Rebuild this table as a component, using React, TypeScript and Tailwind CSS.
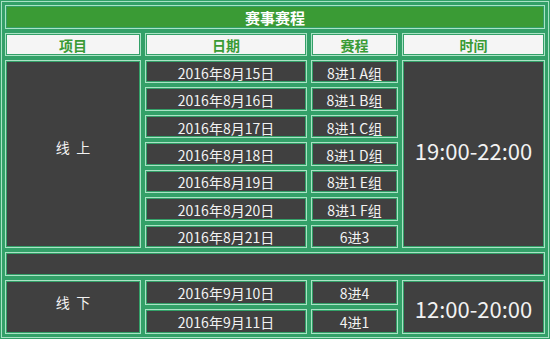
import React from "react";

const font = { fontFamily: '"Noto Sans CJK SC", "Noto Sans", sans-serif' };

function Cell({
  className = "",
  children,
}: {
  className?: string;
  children?: React.ReactNode;
}) {
  return (
    <div
      className={
        "flex items-center justify-center border border-[#a9e3c5] shadow-[inset_0_0_0_1px_#33a068] leading-none " +
        className
      }
    >
      {children}
    </div>
  );
}

const online = [
  ["2016年8月15日", "8进1 A组"],
  ["2016年8月16日", "8进1 B组"],
  ["2016年8月17日", "8进1 C组"],
  ["2016年8月18日", "8进1 D组"],
  ["2016年8月19日", "8进1 E组"],
  ["2016年8月20日", "8进1 F组"],
  ["2016年8月21日", "6进3"],
];

const offline = [
  ["2016年9月10日", "8进4"],
  ["2016年9月11日", "4进1"],
];

export default function App() {
  const dark = "bg-[#404040] text-[#f2f2f2] text-[14px] pt-[2px]";
  return (
    <div className="w-[550px] h-[339px] bg-[#33a068] p-px" style={font}>
      <div className="h-full border border-[#a9e3c5] p-[3px]">
        <div className="grid grid-cols-[136px_162px_87px_143px] grid-rows-[24px_23px_repeat(7,23.43px)_24px_25px_25px] gap-[4px]">
          <Cell className="col-span-4 bg-[#3a9b35] text-white font-bold text-[15px]">
            赛事赛程
          </Cell>
          <Cell className="bg-[#f5f5f5] text-[#3a9b35] font-bold text-[14px]">项目</Cell>
          <Cell className="bg-[#f5f5f5] text-[#3a9b35] font-bold text-[14px]">日期</Cell>
          <Cell className="bg-[#f5f5f5] text-[#3a9b35] font-bold text-[14px]">赛程</Cell>
          <Cell className="bg-[#f5f5f5] text-[#3a9b35] font-bold text-[14px]">时间</Cell>

          <Cell className="row-span-7 col-start-1 row-start-3 bg-[#404040] text-[#f2f2f2] text-[14px] pb-[14px]">
            线&nbsp;&nbsp;上
          </Cell>
          {online.map(([d, s]) => (
            <React.Fragment key={d}>
              <Cell className={"col-start-2 " + dark}>{d}</Cell>
              <Cell className={"col-start-3 " + dark}>{s}</Cell>
            </React.Fragment>
          ))}
          <Cell className="col-start-4 row-start-3 row-span-7 bg-[#404040] text-[#f2f2f2] text-[22px] pb-[8px]">
            19:00-22:00
          </Cell>

          <Cell className="col-span-4 bg-[#404040]" />

          <Cell className="row-span-2 col-start-1 bg-[#404040] text-[#f2f2f2] text-[14px] pb-[10px]">
            线&nbsp;&nbsp;下
          </Cell>
          {offline.map(([d, s]) => (
            <React.Fragment key={d}>
              <Cell className={"col-start-2 " + dark}>{d}</Cell>
              <Cell className={"col-start-3 " + dark}>{s}</Cell>
            </React.Fragment>
          ))}
          <Cell className="col-start-4 row-start-11 row-span-2 bg-[#404040] text-[#f2f2f2] text-[22px] pt-[2px]">
            12:00-20:00
          </Cell>
        </div>
      </div>
    </div>
  );
}
